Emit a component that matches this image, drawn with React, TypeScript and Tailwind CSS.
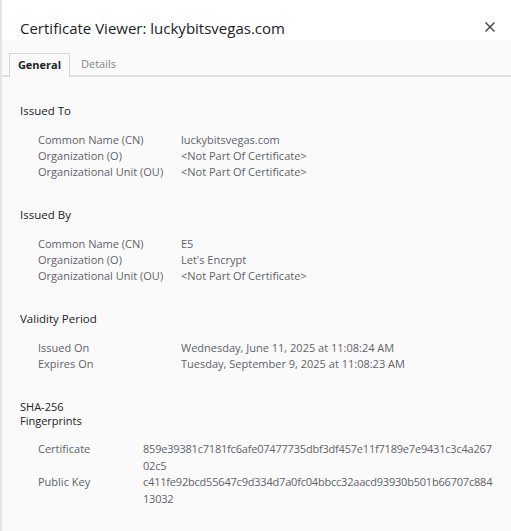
import React from 'react';

type Row = { label: string; value: string };

const Section = ({ title, rows }: { title: React.ReactNode; rows: Row[] }) => (
    <div className="mb-[28px]">
        <h3 className="text-[11.5px] leading-[14px] text-[#202124] mb-[14px]">{title}</h3>
        <div className="pl-[18px]">
            {rows.map((row, index) => (
                <div key={index} className="flex text-[11px] leading-[16px] text-[#5f6368]">
                    <div className="w-[143px] shrink-0">{row.label}</div>
                    <div className="w-[320px]">{row.value}</div>
                </div>
            ))}
        </div>
    </div>
);

// split is where the value wraps in the viewer
const fingerprints = [
    { label: 'Certificate', value: '859e39381c7181fc6afe07477735dbf3df457e11f7189e7e9431c3c4a26702c5', split: 60 },
    { label: 'Public Key', value: 'c411fe92bcd55647c9d334d7a0fc04bbcc32aacd93930b501b66707c88413032', split: 59 },
];

const App: React.FC = () => {
    return (
        <div className="w-[511px] h-[531px] overflow-hidden bg-[#fafafa] border-l-2 border-[#e4e4e4] font-['Open_Sans','Noto_Sans',sans-serif]">
            {/* Header */}
            <div className="bg-white h-[40px] flex items-start justify-between pl-[18px] pr-[15px] pt-[18px]">
                <h1 className="text-[15px] leading-[20px] text-[#202124]">Certificate Viewer: luckybitsvegas.com</h1>
                <svg width="12" height="12" viewBox="0 0 12 12" className="mt-[3px]">
                    <path d="M1.5 1.5 L10.5 10.5 M10.5 1.5 L1.5 10.5" stroke="#3c4043" strokeWidth="1.4" />
                </svg>
            </div>

            {/* Tabs */}
            <div className="flex items-end h-[37px] pl-[7px] border-b-2 border-[#dedede]">
                <div className="h-[24px] -mb-[2px] w-[61px] justify-center bg-[#fafafa] border border-b-0 border-[#d6d6d6] flex items-center text-[11px] font-bold text-[#202124]">
                    General
                </div>
                <div className="h-[22px] px-[11px] flex items-center text-[11px] text-[#80868b]">Details</div>
            </div>

            {/* Content */}
            <div className="pl-[18px] pt-[27px]">
                <Section
                    title="Issued To"
                    rows={[
                        { label: 'Common Name (CN)', value: 'luckybitsvegas.com' },
                        { label: 'Organization (O)', value: '<Not Part Of Certificate>' },
                        { label: 'Organizational Unit (OU)', value: '<Not Part Of Certificate>' },
                    ]}
                />
                <Section
                    title="Issued By"
                    rows={[
                        { label: 'Common Name (CN)', value: 'E5' },
                        { label: 'Organization (O)', value: "Let's Encrypt" },
                        { label: 'Organizational Unit (OU)', value: '<Not Part Of Certificate>' },
                    ]}
                />
                <Section
                    title="Validity Period"
                    rows={[
                        { label: 'Issued On', value: 'Wednesday, June 11, 2025 at 11:08:24 AM' },
                        { label: 'Expires On', value: 'Tuesday, September 9, 2025 at 11:08:23 AM' },
                    ]}
                />
                <div>
                    <h3 className="text-[11px] leading-[14px] text-[#202124] mb-[13px]">
                        SHA-256
                        <br />
                        Fingerprints
                    </h3>
                    <div className="pl-[18px]">
                        {fingerprints.map((row) => (
                            <div key={row.label} className="flex text-[11px] leading-[16.5px] text-[#5f6368]">
                                <div className="w-[105px] shrink-0">{row.label}</div>
                                <div className="w-[356px] tracking-[-0.2px]">
                                    <div>{row.value.slice(0, row.split)}</div>
                                    <div>{row.value.slice(row.split)}</div>
                                </div>
                            </div>
                        ))}
                    </div>
                </div>
            </div>
        </div>
    );
};

export default App;
